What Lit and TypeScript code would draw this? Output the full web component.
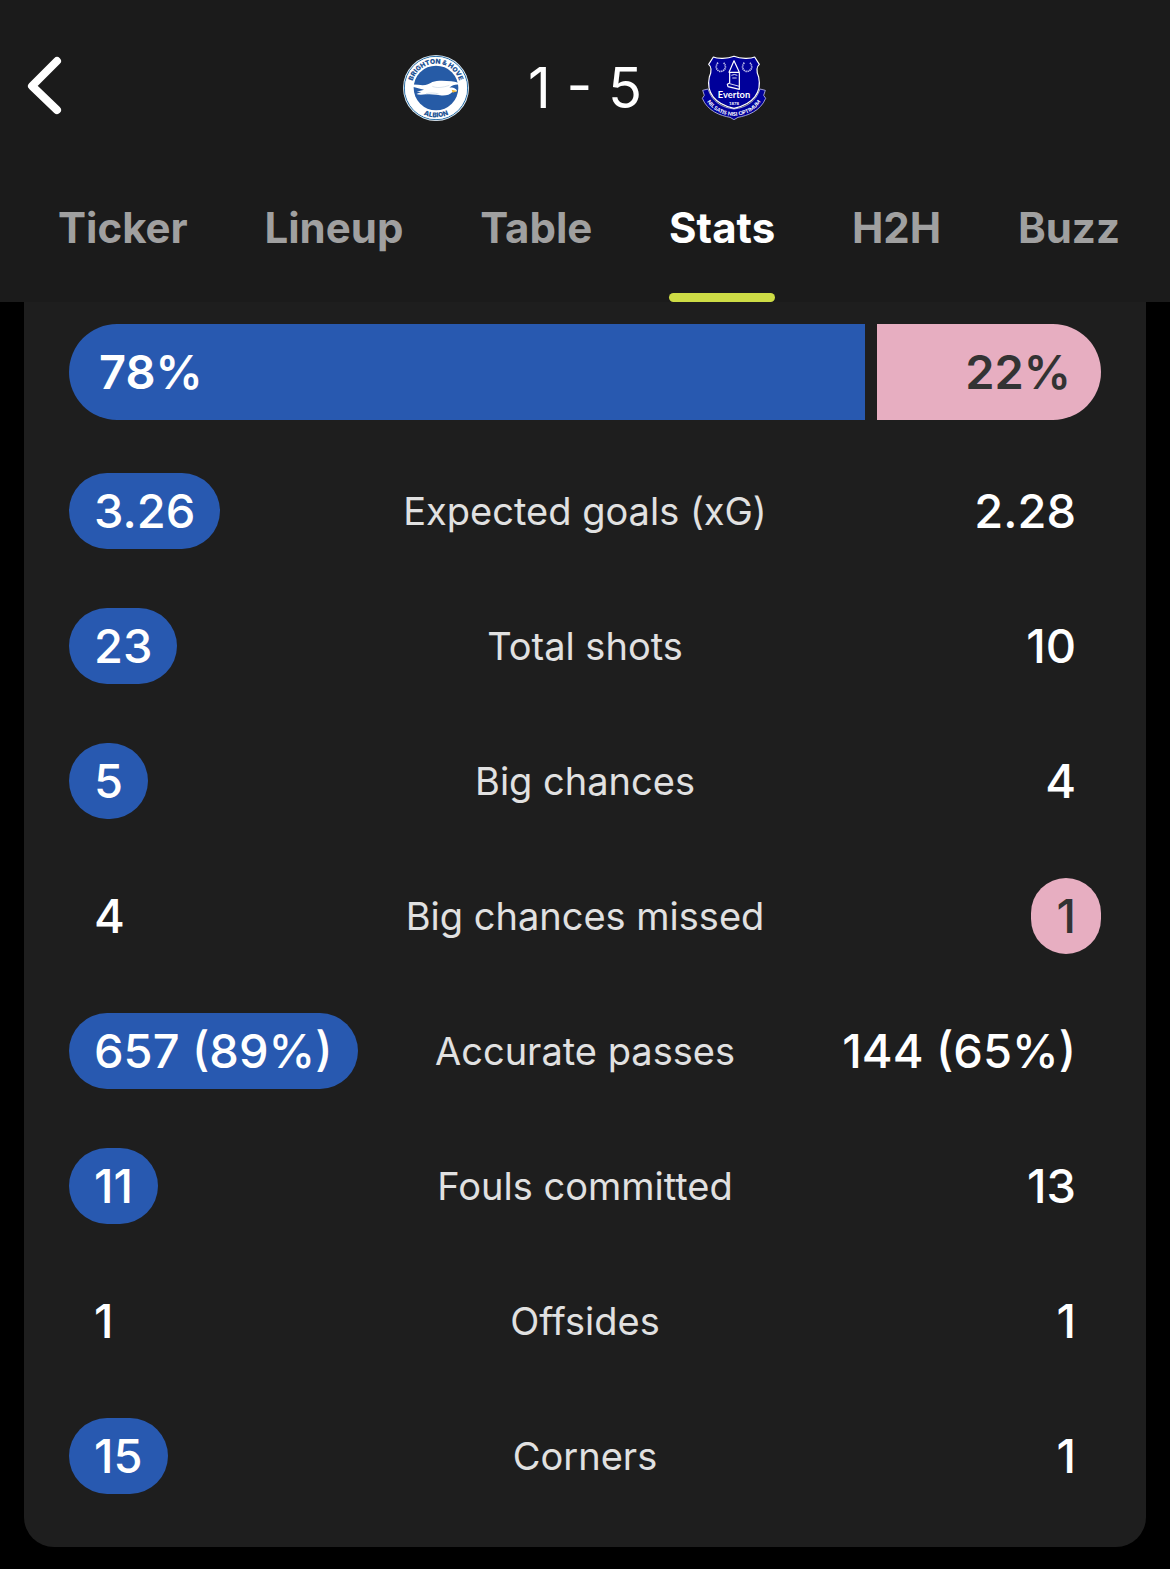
import { LitElement, html, css, svg } from "lit";
import { customElement, property, state } from "lit/decorators.js";
import { classMap } from "lit/directives/class-map.js";

type Side = "home" | "away" | "none";

interface Stat {
  label: string;
  home: string;
  away: string;
  leader: Side;
}

const TABS = ["Ticker", "Lineup", "Table", "Stats", "H2H", "Buzz"];

const STATS: Stat[] = [
  { label: "Expected goals (xG)", home: "3.26", away: "2.28", leader: "home" },
  { label: "Total shots", home: "23", away: "10", leader: "home" },
  { label: "Big chances", home: "5", away: "4", leader: "home" },
  { label: "Big chances missed", home: "4", away: "1", leader: "away" },
  { label: "Accurate passes", home: "657 (89%)", away: "144 (65%)", leader: "home" },
  { label: "Fouls committed", home: "11", away: "13", leader: "home" },
  { label: "Offsides", home: "1", away: "1", leader: "none" },
  { label: "Corners", home: "15", away: "1", leader: "home" },
];

const brightonCrest = svg`
  <svg class="crest" viewBox="39 30 198 198" role="img" aria-label="Brighton &amp; Hove Albion">
    <defs>
      <path id="bha-top" d="M65 129 A73 73 0 0 1 211 129" />
      <path id="bha-bottom" d="M50 129 A88 88 0 0 0 226 129" />
    </defs>
    <circle cx="138" cy="129" r="99" fill="#dfeaf2" />
    <circle cx="138" cy="129" r="95" fill="none" stroke="#2a6fa8" stroke-width="3" />
    <circle cx="138" cy="129" r="93" fill="#ffffff" />
    <circle cx="138" cy="129" r="67" fill="#265ba6" />
    <g font-family="Inter, sans-serif" font-weight="900" font-size="20" fill="#1f5596" text-anchor="middle">
      <text><textPath href="#bha-top" startOffset="50%">BRIGHTON &amp; HOVE</textPath></text>
      <text><textPath href="#bha-bottom" startOffset="50%">ALBION</textPath></text>
    </g>
    <path
      d="M48 121 C66 117 82 119 98 121 C110 121 118 116 127 111 C142 106 164 107 184 109 C198 111 209 114 213 120 C199 116 188 120 178 128 C188 126 200 131 201 138 C196 142 192 141 187 141 C180 150 165 153 150 151 C136 148 120 149 108 148 C98 149 86 150 79 147 L94 141 L80 140 L102 134 C88 131 66 125 48 121 Z"
      fill="#ffffff"
    />
    <path d="M127 124 C140 130 158 128 178 121 M108 146 C122 143 134 143 146 147" fill="none" stroke="#c9d7e4" stroke-width="2" />
    <path d="M185 134 L202 138 L188 143 Z" fill="#f2b632" />
  </svg>
`;

const evertonCrest = svg`
  <svg class="crest" viewBox="33 30 198 198" role="img" aria-label="Everton">
    <defs>
      <path id="efc-motto" d="M45 158 C60 194 98 212 132 213 C166 212 204 194 219 158" />
    </defs>
    <path
      d="M38 136 L54 132 C66 170 96 188 132 192 C168 188 198 170 210 132 L226 136 L221 151 L227 160 C211 199 172 212 144 217 L132 224 L120 217 C92 212 53 199 37 160 L43 151 Z"
      fill="#00009a" stroke="#b9b9e6" stroke-width="2.5"
    />
    <path
      d="M70 36 C82 42 112 42 132 34 C152 42 182 42 194 36 L208 58 C196 68 200 82 206 96 C216 142 190 178 132 190 C74 178 48 142 58 96 C64 82 68 68 56 58 Z"
      fill="#00009a" stroke="#ffffff" stroke-width="3.5" stroke-linejoin="round"
    />
    <g fill="none" stroke="#c4c4ee" stroke-width="5" stroke-dasharray="4 2">
      <path d="M84 53 C72 67 83 81 93 79 C104 78 112 66 101 53" />
      <path d="M163 53 C151 67 162 81 172 79 C183 78 191 66 180 53" />
    </g>
    <g fill="none" stroke="#ffffff" stroke-width="3.5" stroke-linejoin="round">
      <path d="M132 47 L117 82 H148 Z" />
      <path d="M119 83 V114 L112 118 L114 125 L148 133 V83" />
      <path d="M124 91 Q133 86 142 91 M127 99 H140 M119 116 L148 124" stroke-width="2.5" />
    </g>
    <text x="132" y="159" text-anchor="middle" font-family="Lato, sans-serif" font-weight="700" font-size="28" fill="#ffffff">Everton</text>
    <text x="132" y="179" text-anchor="middle" font-family="Lato, sans-serif" font-weight="700" font-size="13" fill="#ffffff">1878</text>
    <text font-family="Lato, sans-serif" font-weight="900" font-size="16" fill="#ffffff" text-anchor="middle">
      <textPath href="#efc-motto" startOffset="50%">NIL SATIS NISI OPTIMUM</textPath>
    </text>
  </svg>
`;

@customElement("match-header")
export class MatchHeader extends LitElement {
  @state() private active = "Stats";

  static styles = css`
    :host {
      display: block;
      background: #1b1b1b;
    }
    .top {
      display: grid;
      grid-template-columns: 1fr auto 1fr;
      align-items: center;
      height: 176px;
    }
    button {
      border: 0;
      padding: 0;
      background: none;
      font: inherit;
      cursor: pointer;
    }
    .back {
      justify-self: start;
      display: flex;
      padding: 0 24px;
    }
    .chevron {
      width: 40px;
      height: 64px;
    }
    .result {
      display: flex;
      align-items: center;
      gap: 59px;
    }
    .crest {
      display: block;
      width: 66px;
      height: 66px;
    }
    .score {
      margin: 0;
      font-size: 56px;
      line-height: 64px;
      font-weight: 400;
      color: #ffffff;
      white-space: nowrap;
    }
    .tabs {
      display: flex;
      justify-content: space-between;
      padding: 26px 48px 0 56px;
    }
    .tab {
      display: flex;
      flex-direction: column;
      gap: 39px;
      padding: 0 2px;
      font-size: 42px;
      line-height: 52px;
      font-weight: 700;
      color: #a0a0a0;
    }
    .tab::after {
      content: "";
      align-self: stretch;
      height: 9px;
      border-radius: 5px;
    }
    .tab.active {
      color: #ffffff;
    }
    .tab.active::after {
      background: #cddc45;
    }
  `;

  render() {
    return html`
      <div class="top">
        <button class="back" aria-label="Back">
          <svg class="chevron" viewBox="0 0 40 64" aria-hidden="true">
            <path d="M33 5 L8 30 L33 54" fill="none" stroke="#ffffff" stroke-width="8" stroke-linecap="round" stroke-linejoin="round" />
          </svg>
        </button>
        <div class="result">
          ${brightonCrest}
          <h1 class="score">1 - 5</h1>
          ${evertonCrest}
        </div>
      </div>
      <div class="tabs" role="tablist">
        ${TABS.map(
          (name) => html`
            <button
              role="tab"
              aria-selected=${name === this.active}
              class=${classMap({ tab: true, active: name === this.active })}
              @click=${() => (this.active = name)}
            >${name}</button>
          `
        )}
      </div>
    `;
  }
}

@customElement("possession-bar")
export class PossessionBar extends LitElement {
  @property({ type: Number }) home = 50;

  static styles = css`
    :host {
      display: flex;
      gap: 12px;
      font-size: 47px;
      line-height: 96px;
      font-weight: 600;
    }
    .part {
      flex-basis: 0;
      min-width: 0;
      box-sizing: border-box;
    }
    .share {
      padding: 0 30px;
    }
    .home {
      background: #2859b0;
      color: #ffffff;
      border-radius: 48px 0 0 48px;
    }
    .away {
      background: #e7aec1;
      color: #333333;
      border-radius: 0 48px 48px 0;
      text-align: right;
    }
  `;

  render() {
    const away = 100 - this.home;
    return html`
      <div class="part home" style="flex-grow: ${this.home}"><div class="share">${this.home}%</div></div>
      <div class="part away" style="flex-grow: ${away}"><div class="share">${away}%</div></div>
    `;
  }
}

@customElement("stats-table")
export class StatsTable extends LitElement {
  @property({ attribute: false }) stats: Stat[] = [];

  static styles = css`
    :host {
      display: block;
    }
    .table {
      width: 100%;
      table-layout: fixed;
      border-collapse: collapse;
    }
    .cell {
      height: 135px;
      padding: 0;
      text-align: left;
      white-space: nowrap;
    }
    .label {
      width: 36%;
      text-align: center;
      font-size: 38px;
      line-height: 48px;
      font-weight: 400;
      color: #e1e1e1;
    }
    .right {
      text-align: right;
    }
    .value {
      display: inline-block;
      vertical-align: middle;
      padding: 0 25px;
      border-radius: 38px;
      font-size: 47px;
      line-height: 76px;
      font-weight: 500;
      color: #ffffff;
    }
    .value.home {
      background: #2859b0;
    }
    .value.away {
      background: #e7aec1;
      color: #333333;
    }
  `;

  render() {
    return html`
      <table class="table">
        <tbody>
          ${this.stats.map(
            (s) => html`
              <tr>
                <td class="cell"><span class=${classMap({ value: true, home: s.leader === "home" })}>${s.home}</span></td>
                <th class="cell label" scope="row">${s.label}</th>
                <td class="cell right"><span class=${classMap({ value: true, away: s.leader === "away" })}>${s.away}</span></td>
              </tr>
            `
          )}
        </tbody>
      </table>
    `;
  }
}

@customElement("app-root")
export class AppRoot extends LitElement {
  static styles = css`
    :host {
      display: block;
      box-sizing: border-box;
      min-height: 100vh;
      padding-bottom: 22px;
      background: #000000;
      font-family: Inter, "Liberation Sans", sans-serif;
    }
    .card {
      display: flex;
      flex-direction: column;
      gap: 23px;
      margin: 0 24px;
      padding: 22px 45px 24px;
      background: #1e1e1e;
      border-radius: 0 0 30px 30px;
    }
  `;

  render() {
    return html`
      <match-header></match-header>
      <main class="card">
        <possession-bar home="78"></possession-bar>
        <stats-table .stats=${STATS}></stats-table>
      </main>
    `;
  }
}
